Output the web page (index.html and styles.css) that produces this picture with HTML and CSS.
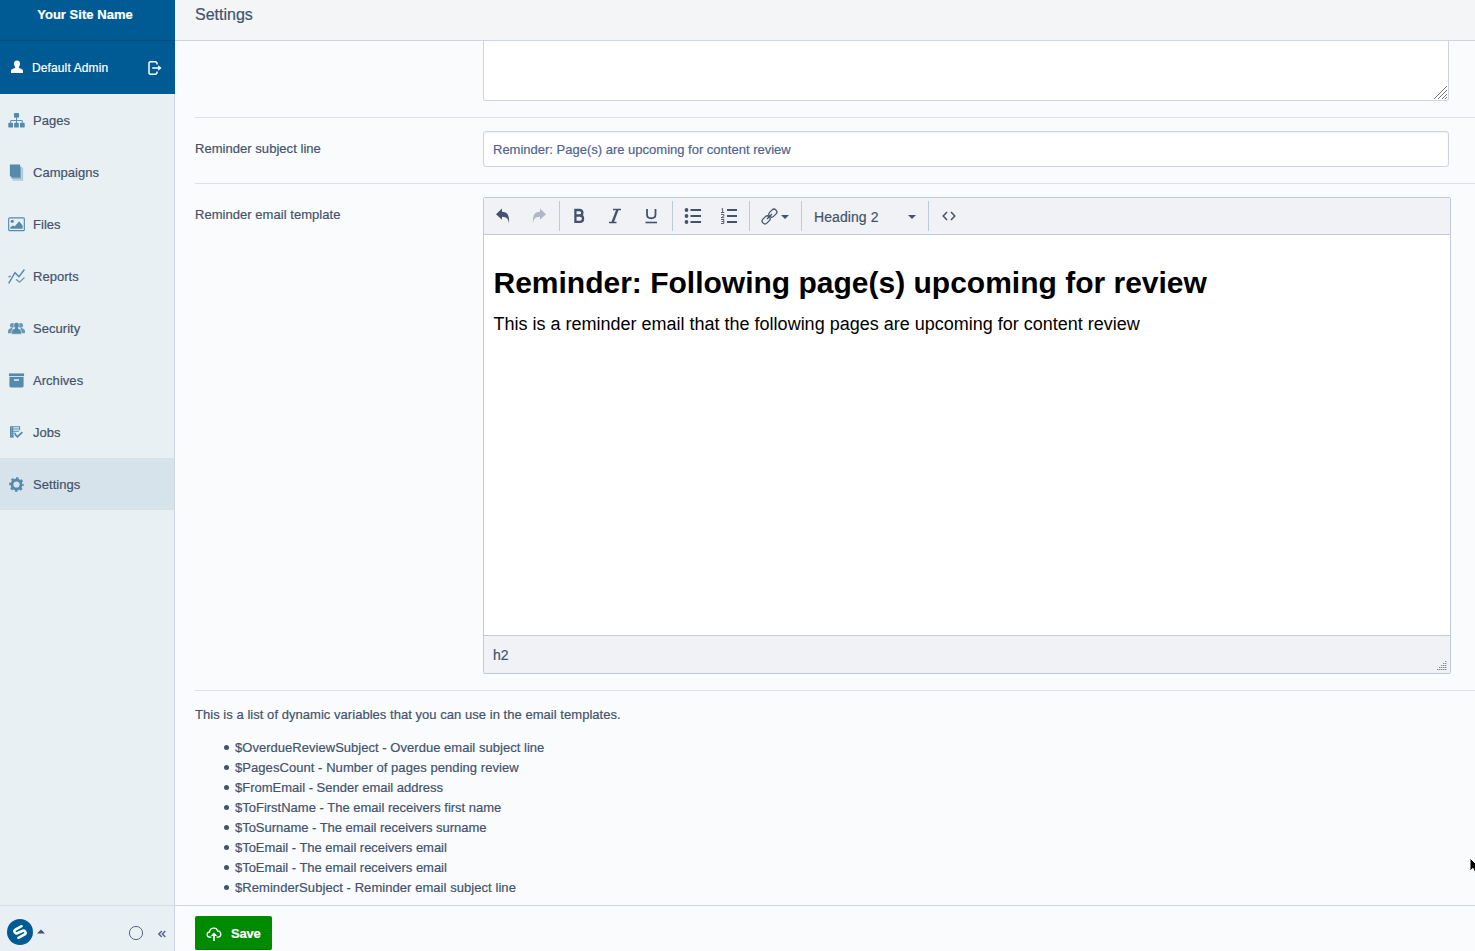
FILE: index.html
```html
<!DOCTYPE html>
<html lang="en">
<head>
<meta charset="utf-8">
<title>Settings</title>
<link rel="stylesheet" href="styles.css">
</head>
<body>
<div class="app">
  <aside class="sidebar">
    <div class="site-name">Your Site Name</div>
    <div class="user">
      <svg class="user-icon" width="14" height="14" viewBox="0 0 14 14"><path d="M7 .6c2 0 3 1.200 3 3 0 1.500-.5 2.600-1.200 3.400v.7c.6.8 4.200.9 4.200 3.200v2.100H1v-2.100c0-2.300 3.600-2.400 4.200-3.200V7C4.500 6.200 4 5.100 4 3.600c0-1.800 1-3 3-3z" fill="#fff"/></svg>
      <span class="user-name">Default Admin</span>
      <svg class="logout" width="16" height="16" viewBox="0 0 16 16" fill="none" stroke="#fff" stroke-width="1.500"><path d="M10 4.600V3L8.800 1.800H3.500Q2 1.800 2 3.300v9.400q0 1.500 1.500 1.500h5.300L10 13v-1.600"/><path d="M5.200 8h7"/><path d="M11.200 5.200 14.600 8l-3.400 2.800z" fill="#fff" stroke="none"/></svg>
    </div>
    <nav class="menu">
      <a class="item"><svg width="17" height="17" viewBox="0 0 18 18" fill="#558aaa"><rect x="6.300" y="1" width="5.400" height="5" rx="1"/><rect x="0.300" y="11.500" width="5" height="5" rx="1"/><rect x="6.500" y="11.500" width="5" height="5" rx="1"/><rect x="12.700" y="11.500" width="5" height="5" rx="1"/><path d="M9 6v6M2.900 12V9h12.200v3" fill="none" stroke="#558aaa"/></svg><span>Pages</span></a>
      <a class="item"><svg width="17" height="17" viewBox="0 0 18 18"><path d="M5 3.800h11V17.600H5z" fill="#a9c6d5"/><path d="M3.500 2.500h11v13.500h-11z" fill="#7fa9c0" stroke="#e8f0f4" stroke-width=".6"/><path d="M2 .4h10.800V14H3.500L2 12.500z" fill="#558aaa"/></svg><span>Campaigns</span></a>
      <a class="item"><svg width="17" height="17" viewBox="0 0 18 18"><rect x=".7" y="2" width="16.600" height="13.500" rx="1" fill="none" stroke="#558aaa" stroke-width="1.200"/><circle cx="4.500" cy="5.600" r="1.700" fill="#558aaa"/><path d="M2.500 13.500v-1.800L5.500 10l1.500 1 4.800-5.500L15.500 10v3.500z" fill="#558aaa"/></svg><span>Files</span></a>
      <a class="item"><svg width="17" height="17" viewBox="0 0 18 18" fill="none" stroke="#558aaa" stroke-width="1.500"><path d="M.7 16.300 7.400 5l4.200 4.200L17.400 1.600"/><path d="M.5 9.500 3 8.500M8.500 12l3.800 3 5.100-5" opacity=".8"/></svg><span>Reports</span></a>
      <a class="item"><svg width="17" height="17" viewBox="0 0 18 18" fill="#558aaa"><g opacity=".85"><circle cx="4.500" cy="5.800" r="2.500"/><circle cx="13.500" cy="5.800" r="2.500"/><path d="M0 14v-2.200c0-2.200 2-2.600 4.500-3.500L6 14zM18 14v-2.200c0-2.200-2-2.600-4.500-3.500L12 14z"/></g><path d="M9 2.600c2 0 2.900 1.300 2.900 2.900 0 1.300-.5 2.200-1.300 2.900.4 1.200 3.500 1.300 3.500 3.900V15H3.900v-2.700c0-2.600 3.100-2.700 3.500-3.900-.8-.7-1.300-1.600-1.300-2.900 0-1.600.9-2.900 2.900-2.900z" stroke="#e8f0f4" stroke-width=".6"/></svg><span>Security</span></a>
      <a class="item"><svg width="17" height="17" viewBox="0 0 18 18" fill="#558aaa"><path d="M1 1.500h16v2.900H1z"/><path fill-rule="evenodd" d="M1.500 5.300h15v9.500q0 1.500-1.500 1.500H3q-1.500 0-1.500-1.500zM6.300 7.800v1.500h5.400V7.800z"/></svg><span>Archives</span></a>
      <a class="item"><svg width="17" height="17" viewBox="0 0 18 18"><path d="M2.700 3h9.600v3.600M2.700 3v10.800h3.600M5 3v10.500M3 5.300h8.600M3 7.600h8.600M3 9.900h5.500M3 12.200h3" fill="none" stroke="#558aaa" stroke-width="1.100"/><path d="M2.200 2.500H5v11.800H2.200z" fill="#558aaa" opacity=".6"/><path d="M7.200 10.700l2.800 2.900L15.200 8.500" fill="none" stroke="#558aaa" stroke-width="1.900"/></svg><span>Jobs</span></a>
      <a class="item active"><svg width="17" height="17" viewBox="0 0 18 18"><circle cx="9" cy="9" r="4.800" fill="none" stroke="#558aaa" stroke-width="3"/><circle cx="9" cy="9" r="6.800" fill="none" stroke="#558aaa" stroke-width="2" stroke-dasharray="2.670 2.670" stroke-dashoffset="1.330"/></svg><span>Settings</span></a>
    </nav>
    <div class="side-foot">
      <svg width="26" height="26" viewBox="0 0 26 26"><circle cx="13" cy="13" r="13" fill="#005a93"/><g fill="none" stroke="#fff" stroke-width="2.500" stroke-linecap="round"><path d="M14.600 7.200 8.800 10.300C6 12 7.800 15.300 10.700 14L15.300 12C18.200 10.700 20 14 17.200 15.700L11.400 18.800"/></g></svg>
      <svg class="caret-up" width="8" height="5" viewBox="0 0 8 5"><path d="M0 4.500 4 .5l4 4z" fill="#43536d"/></svg>
      <svg class="ring" width="16" height="16" viewBox="0 0 16 16"><circle cx="8" cy="8" r="6.600" fill="none" stroke="#506785"/></svg>
      <svg class="collapse" width="8" height="8" viewBox="0 0 8 8"><path d="M3.800.9.900 4l2.900 3.100M7.300.9 4.400 4l2.900 3.100" fill="none" stroke="#566a90" stroke-width="1.500"/></svg>
    </div>
  </aside>
  <main class="main">
    <header class="top"><h1>Settings</h1></header>
    <section class="content">
      <div class="field first">
        <div class="textarea"><svg width="13" height="13" viewBox="0 0 13 13"><path d="M0 13 13 0M4 13l9-9M8 13l5-5M11 13l2-2" stroke="#777" fill="none"/></svg></div>
      </div>
      <div class="field subject">
        <label>Reminder subject line</label>
        <div class="input"><span>Reminder: Page(s) are upcoming for content review</span></div>
      </div>
      <div class="field template">
        <label>Reminder email template</label>
        <div class="editor">
          <div class="toolbar">
            <div class="group g1">
              <span class="tool"><svg width="16" height="16" viewBox="0 0 16 16"><path d="M7 .5v3.300c5.500.2 7.500 3 7 11.700C13.500 11.300 12 9 7 8.800v3L1 6.200z" fill="#43536d"/></svg></span>
              <span class="tool"><svg width="16" height="16" viewBox="0 0 16 16"><path d="M9 .5v3.300c-5.500.2-7.500 3-7 11.700C2.500 11.300 4 9 9 8.800v3l6-5.600z" fill="#b0b8c5"/></svg></span>
            </div>
            <div class="group g2">
              <span class="tool"><svg width="16" height="16" viewBox="0 0 16 16"><path d="M4.400 2h3.900c4.100 0 4.100 5.500 0 5.500H4.400zM4.400 7.500h4.500c4.200 0 4.200 6.400 0 6.400H4.400z" fill="none" stroke="#43536d" stroke-width="2.300"/></svg></span>
              <span class="tool"><svg width="16" height="16" viewBox="0 0 16 16" fill="none" stroke="#43536d"><path d="M6 1.500h8M2 14.500h7.500" stroke-width="1.300"/><path d="M10.500 1.500 5.500 14.500" stroke-width="2.300"/></svg></span>
              <span class="tool"><svg width="16" height="16" viewBox="0 0 16 16" fill="none" stroke="#43536d"><path d="M4 1v5.500c0 5 8.500 5 8.500 0V1" stroke-width="1.800"/><path d="M2.500 14.500h11.500" stroke-width="1.600"/></svg></span>
            </div>
            <div class="group g3">
              <span class="tool"><svg width="18" height="16" viewBox="0 0 18 16"><g fill="#43536d"><circle cx="2.500" cy="2" r="1.900"/><circle cx="2.500" cy="8" r="1.900"/><circle cx="2.500" cy="14" r="1.900"/></g><path d="M6.500 2H17M6.500 8H17M6.500 14H17" stroke="#43536d" stroke-width="2"/></svg></span>
              <span class="tool"><svg width="18" height="16" viewBox="0 0 18 16" fill="none" stroke="#43536d"><path d="M7 2h10M7 8h10M7 14h10" stroke-width="2"/><path d="M1.500 1.100 2.600.5v4.300M1 4.500h3.300M1 6.500h2.800v1.600L1.200 9.700h3M1 11.500h2.800v4H1M1.500 13.500h2.200" stroke-width=".9"/></svg></span>
            </div>
            <div class="group g4">
              <svg width="17" height="17" viewBox="0 0 17 17" fill="none" stroke="#43536d" stroke-width="1.250"><g transform="rotate(-45 8.500 8.500)"><rect x="-.6" y="5.700" width="8.700" height="5.600" rx="2.600"/><rect x="8.900" y="5.700" width="8.700" height="5.600" rx="2.600"/><path d="M5 8.500h7"/></g></svg>
              <svg class="caret" width="8" height="4" viewBox="0 0 8 4"><path d="M0 0h8L4 4z" fill="#43536d"/></svg>
            </div>
            <div class="group g5">
              <span class="heading-select">Heading 2</span>
              <svg class="caret" width="8" height="4" viewBox="0 0 8 4"><path d="M0 0h8L4 4z" fill="#43536d"/></svg>
            </div>
            <div class="group g6">
              <svg width="14" height="10" viewBox="0 0 14 10" fill="none" stroke="#43536d" stroke-width="1.500"><path d="M5 1 1.200 5 5 9M9 1l3.800 4L9 9"/></svg>
            </div>
          </div>
          <div class="canvas">
            <h2>Reminder: Following page(s) upcoming for review</h2>
            <p>This is a reminder email that the following pages are upcoming for content review</p>
          </div>
          <div class="status"><span>h2</span>
            <svg width="10" height="9" viewBox="0 0 10 9"><path d="M8 .5h2M6 2.500h4M4 4.500h6M2 6.500h8M0 8.500h10" stroke="#7d8797" stroke-dasharray="1.400 .6"/></svg>
          </div>
        </div>
      </div>
      <p class="intro">This is a list of dynamic variables that you can use in the email templates.</p>
      <ul class="vars">
        <li class="looser">$OverdueReviewSubject - Overdue email subject line</li>
        <li class="loosest">$PagesCount - Number of pages pending review</li>
        <li>$FromEmail - Sender email address</li>
        <li>$ToFirstName - The email receivers first name</li>
        <li class="tighter">$ToSurname - The email receivers surname</li>
        <li class="tighter">$ToEmail - The email receivers email</li>
        <li class="tighter">$ToEmail - The email receivers email</li>
        <li class="loosest">$ReminderSubject - Reminder email subject line</li>
      </ul>
    </section>
    <footer class="actions">
      <div class="save"><svg width="16" height="15" viewBox="0 0 16 15" fill="none" stroke="#fff" stroke-width="1.300"><path d="M5.500 10.200H4C.3 10 .2 5.300 3.600 5 3.900.3 10.500-.3 11.700 4c4-.2 4.200 6 .3 6.200h-1.500"/><path d="M8 14V7.500" stroke-width="1.700"/><path d="M4.800 9 8 5.400 11.200 9z" fill="#fff" stroke="none"/></svg><span>Save</span></div>
    </footer>
  </main>
</div>
<svg class="pointer" width="12" height="18" viewBox="0 0 12 18"><path d="M1 1v13l3-2.700 2 4.700 2.500-1-2-4.500h4.200z" fill="#000" stroke="#fff"/></svg>
</body>
</html>
```
FILE: styles.css
```css
* { box-sizing: border-box; }
html, body { height: 100%; overflow: hidden; }
body {
  margin: 0;
  font: 13px/20px "Liberation Sans", Arial, sans-serif;
  color: #43536d;
  background: #fafbfd;
  -webkit-text-stroke: .2px currentColor;
}
svg { display: block; flex: none; }
span, li, label, p, h1, h2 { white-space: nowrap; }
.app { display: grid; grid-template-columns: 175px minmax(0, 1fr); height: 951px; }

.sidebar { display: flex; flex-direction: column; background: #e8f0f4; }
.site-name {
  height: 41px;
  padding: 5px 5px 0 0;
  text-align: center;
  font-weight: bold;
  letter-spacing: .04px;
  color: #fff;
  background: #005a93;
  border-bottom: 1px solid #004e7f;
}
.user { display: flex; align-items: center; height: 53px; padding: 0 12px 0 10px; color: #fff; background: #005a93; }
.user-icon { position: relative; top: -1px; }
.user-name { margin-left: 8px; font-size: 12px; letter-spacing: .12px; }
.logout { margin-left: auto; }
.menu { flex: 1; border-right: 1px solid #ced5e1; }
.item { display: flex; align-items: center; gap: 8px; height: 52px; padding: 1px 0 0 8px; letter-spacing: .04px; }
.item.active { background: #d7e3eb; }
.side-foot {
  display: flex;
  align-items: center;
  height: 46px;
  padding: 6px 8px 0 7px;
  border-top: 1px solid #d5dfe7;
  border-right: 1px solid #ced5e1;
}
.caret-up { margin-left: 4px; }
.ring { margin-left: auto; margin-right: 14px; position: relative; top: 1px; }
.collapse { position: relative; top: 2px; }

.main { display: flex; flex-direction: column; min-width: 0; }
.top { height: 41px; padding: 5px 20px 0; background: #f4f5f7; border-bottom: 1px solid #ced5e1; }
.top h1 { margin: 0; font-size: 16px; line-height: 20px; font-weight: normal; }
.content { flex: 1; padding-left: 20px; }
.field { display: flex; border-bottom: 1px solid #dbe0e9; }
.field label { width: 288px; flex: none; padding-top: 8px; letter-spacing: .04px; }
.first { height: 77px; padding-left: 288px; }
.textarea {
  display: flex;
  align-items: flex-end;
  justify-content: flex-end;
  width: 966px;
  height: 60px;
  padding: 1px;
  background: #fff;
  border: 1px solid #ced5e1;
  border-top: 0;
  border-radius: 0 0 3px 3px;
}
.subject { height: 66px; padding-top: 13px; }
.input {
  display: flex;
  align-items: center;
  width: 966px;
  height: 36px;
  padding: 1px 9px 0;
  color: #4f6590;
  background: #fff;
  border: 1px solid #ced5e1;
  border-radius: 3px;
  box-shadow: inset 0 1px 2px #f0f1f3;
}
.template { height: 507px; padding-top: 13px; }
.editor { display: flex; flex-direction: column; width: 968px; height: 477px; background: #fff; border: 1px solid #c0c9d6; border-radius: 2px; }
.toolbar { display: flex; align-items: center; height: 37px; background: #f1f2f6; border-bottom: 1px solid #becbda; }
.group { display: flex; align-items: center; height: 30px; border-right: 1px solid #becbda; }
.tool { display: flex; justify-content: center; width: 36px; }
.g1 { width: 76px; padding-left: 1px; }
.g2 { width: 113px; padding-left: 1px; }
.g3 { width: 77px; padding-left: 2px; }
.g4 { width: 52px; padding-left: 11px; gap: 3px; }
.g5 { width: 127px; padding: 0 12px; justify-content: space-between; font-size: 14px; }
.g6 { padding-left: 13px; border: 0; }
.caret { position: relative; top: 1px; }
.heading-select { position: relative; top: 1px; letter-spacing: .08px; }
.canvas { flex: 1; padding: 28px 9.500px; color: #000; -webkit-text-stroke: 0; }
.canvas h2 { margin: 0; font-size: 30px; line-height: 40px; }
.canvas p { margin: 8px 0 0; font-size: 18px; line-height: 26px; }
.status { display: flex; align-items: center; justify-content: space-between; height: 38px; padding: 0 3px 0 9px; font-size: 14px; background: #f1f2f6; border-top: 1px solid #c0c9d6; }
.status svg { align-self: flex-end; margin-bottom: 3px; }
.intro { margin: 14px 0 13px; letter-spacing: .04px; }
.vars { margin: 0; padding-left: 40px; list-style: none; }
.vars li::before {
  content: "";
  display: inline-block;
  width: 5px;
  height: 5px;
  margin: 0 6px 2px -11px;
  vertical-align: middle;
  border-radius: 50%;
  background: #43536d;
}
.vars li { line-height: 20px; height: 20px; }
.vars .looser { letter-spacing: .03px; }
.vars .loosest { letter-spacing: .06px; }
.vars .tighter { letter-spacing: -.03px; }
.actions { height: 46px; padding: 10px 20px 0; border-top: 1px solid #ced5e1; }
.save {
  display: flex;
  align-items: center;
  gap: 9px;
  width: 77px;
  height: 34px;
  padding: 3px 11px 0;
  color: #fff;
  font-weight: bold;
  letter-spacing: -.2px;
  background: #008a00;
  border-bottom: 1px solid #007a00;
  border-radius: 2px;
}
.pointer { position: absolute; left: 1469px; top: 857px; }
```
